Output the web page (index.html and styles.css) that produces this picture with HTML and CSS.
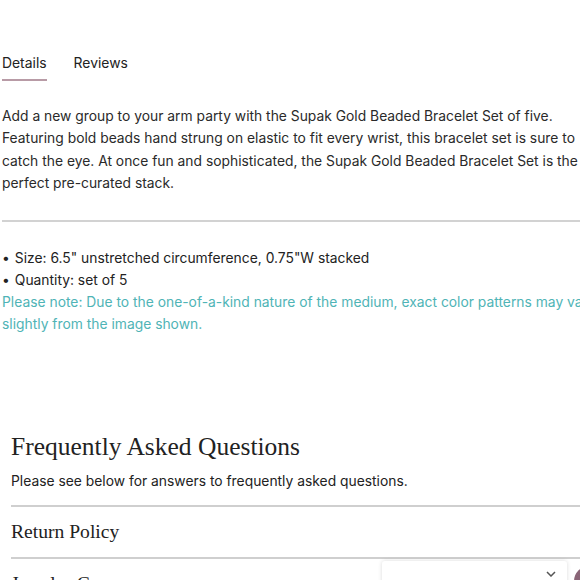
FILE: index.html
```html
<!DOCTYPE html>
<html>
<head>
<meta charset="utf-8">
<link rel="stylesheet" href="styles.css">
</head>
<body>
<div class="page">
  <nav class="tabs">
    <span class="tab active">Details</span>
    <span class="tab">Reviews</span>
  </nav>
  <p class="desc">Add a new group to your arm party with the Supak Gold Beaded Bracelet Set of five. Featuring bold beads hand strung on elastic to fit every wrist, this bracelet set is sure to catch the eye. At once fun and sophisticated, the Supak Gold Beaded Bracelet Set is the perfect pre-curated stack.</p>
  <hr class="rule">
  <ul class="specs">
    <li>Size: 6.5" unstretched circumference, 0.75"W stacked</li>
    <li>Quantity: set of 5</li>
  </ul>
  <p class="note">Please note: Due to the one-of-a-kind nature of the medium, exact color patterns may vary slightly from the image shown.</p>
  <section class="faq">
    <h2 class="faq-title">Frequently Asked Questions</h2>
    <p class="faq-sub">Please see below for answers to frequently asked questions.</p>
    <div class="faq-item">Return Policy</div>
    <div class="faq-item">Jewelry Care</div>
  </section>
</div>
<div class="widget">
  <svg class="chev" width="10" height="6" viewBox="0 0 10 6"><path d="M1 1l4 4 4-4" fill="none" stroke="#555" stroke-width="1.5"/></svg>
</div>
<div class="bubble"></div>
</body>
</html>
```
FILE: styles.css
```css
html, body { margin: 0; padding: 0; background: #fff; overflow: hidden; }
body { width: 580px; height: 580px; font-family: Inter, "Liberation Sans", sans-serif; color: #222; }
.page { padding: 0 0 0 2px; }
.tabs { display: flex; gap: 27px; padding-top: 54px; font-size: 13.9px; }
.tab { padding-bottom: 7px; line-height: 18px; color: #222; }
.tab.active { border-bottom: 2px solid #b89ba6; }
.desc { margin: 24px 0 0; font-size: 13.85px; line-height: 22.3px; color: #2a2a2a; width: 600px; }
.rule { margin: 26px 0 0; border: none; border-top: 2px solid #d2d2d2; }
.specs { list-style: none; margin: 25px 0 0; padding: 0; font-size: 13.85px; line-height: 22px; color: #222; }
.specs li::before { content: "\2022"; margin-right: 5px; }
.note { margin: 0; font-size: 13.85px; line-height: 22px; color: #4fb4b6; width: 610px; }
.faq { padding-left: 9px; margin-top: 95px; }
.faq-title { margin: 0; font-family: "Liberation Serif", serif; font-weight: normal; font-size: 25.5px; line-height: 34px; color: #222; }
.faq-sub { margin: 7px 0 0; font-size: 13.85px; line-height: 20px; color: #222; }
.faq-item { margin-top: 14px; border-top: 2px solid #cfcfcf; padding: 13px 0 13px; font-family: "Liberation Serif", serif; font-size: 19.6px; line-height: 24px; color: #222; }
.faq-item + .faq-item { margin-top: 0; }
.widget { position: fixed; left: 382px; top: 561px; width: 185px; height: 40px; background: #fff; border-radius: 3px; box-shadow: 0 0 4px rgba(0,0,0,0.15); }
.chev { position: absolute; right: 11px; top: 10px; }
.bubble { position: fixed; left: 574px; top: 566px; width: 30px; height: 30px; border-radius: 50%; background: #8a6577; }
```
